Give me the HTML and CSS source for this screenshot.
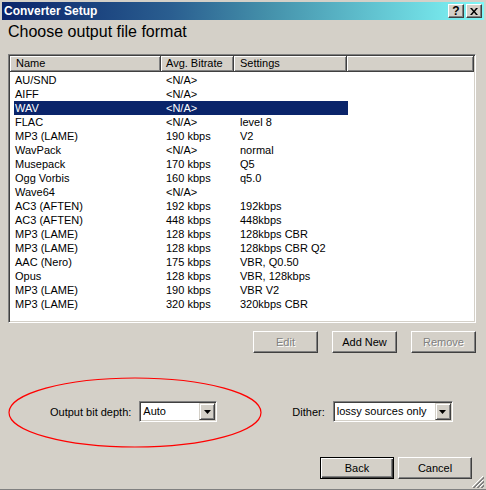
FILE: index.html
```html
<!DOCTYPE html>
<html>
<head>
<meta charset="utf-8">
<link rel="stylesheet" href="styles.css">
</head>
<body>
<div class="window">
  <div class="titlebar">
    <span class="title">Converter Setup</span>
    <div class="tb-buttons">
      <span class="tb-btn">?</span>
      <span class="tb-btn"><svg width="8" height="7" viewBox="0 0 8 7"><path d="M0 0h2l2 2.5L6 0h2L5 3.5 8 7H6L4 4.5 2 7H0l3-3.5z" fill="#000"/></svg></span>
    </div>
  </div>
  <div class="content">
    <div class="heading">Choose output file format</div>
    <div class="listbox">
      <div class="header">
        <div class="hcell h-name">Name</div>
        <div class="hcell h-rate">Avg. Bitrate</div>
        <div class="hcell h-set">Settings</div>
        <div class="hcell h-fill"></div>
      </div>
      <div class="rows">
        <div class="row"><span class="c-name">AU/SND</span><span class="c-rate">&lt;N/A&gt;</span><span class="c-set"></span></div>
        <div class="row"><span class="c-name">AIFF</span><span class="c-rate">&lt;N/A&gt;</span><span class="c-set"></span></div>
        <div class="row selected"><span class="c-name">WAV</span><span class="c-rate">&lt;N/A&gt;</span><span class="c-set"></span></div>
        <div class="row"><span class="c-name">FLAC</span><span class="c-rate">&lt;N/A&gt;</span><span class="c-set">level 8</span></div>
        <div class="row"><span class="c-name">MP3 (LAME)</span><span class="c-rate">190 kbps</span><span class="c-set">V2</span></div>
        <div class="row"><span class="c-name">WavPack</span><span class="c-rate">&lt;N/A&gt;</span><span class="c-set">normal</span></div>
        <div class="row"><span class="c-name">Musepack</span><span class="c-rate">170 kbps</span><span class="c-set">Q5</span></div>
        <div class="row"><span class="c-name">Ogg Vorbis</span><span class="c-rate">160 kbps</span><span class="c-set">q5.0</span></div>
        <div class="row"><span class="c-name">Wave64</span><span class="c-rate">&lt;N/A&gt;</span><span class="c-set"></span></div>
        <div class="row"><span class="c-name">AC3 (AFTEN)</span><span class="c-rate">192 kbps</span><span class="c-set">192kbps</span></div>
        <div class="row"><span class="c-name">AC3 (AFTEN)</span><span class="c-rate">448 kbps</span><span class="c-set">448kbps</span></div>
        <div class="row"><span class="c-name">MP3 (LAME)</span><span class="c-rate">128 kbps</span><span class="c-set">128kbps CBR</span></div>
        <div class="row"><span class="c-name">MP3 (LAME)</span><span class="c-rate">128 kbps</span><span class="c-set">128kbps CBR Q2</span></div>
        <div class="row"><span class="c-name">AAC (Nero)</span><span class="c-rate">175 kbps</span><span class="c-set">VBR, Q0.50</span></div>
        <div class="row"><span class="c-name">Opus</span><span class="c-rate">128 kbps</span><span class="c-set">VBR, 128kbps</span></div>
        <div class="row"><span class="c-name">MP3 (LAME)</span><span class="c-rate">190 kbps</span><span class="c-set">VBR V2</span></div>
        <div class="row"><span class="c-name">MP3 (LAME)</span><span class="c-rate">320 kbps</span><span class="c-set">320kbps CBR</span></div>
      </div>
    </div>
    <div class="list-buttons">
      <div class="btn disabled">Edit</div>
      <div class="btn">Add New</div>
      <div class="btn disabled">Remove</div>
    </div>
    <div class="options">
      <span class="label">Output bit depth:</span>
      <div class="combo combo-depth"><span class="combo-text">Auto</span><span class="combo-btn"><svg width="7" height="4" viewBox="0 0 7 4"><path d="M0 0h7L3.5 4z" fill="#000"/></svg></span></div>
      <span class="label label-dither">Dither:</span>
      <div class="combo combo-dither"><span class="combo-text">lossy sources only</span><span class="combo-btn"><svg width="7" height="4" viewBox="0 0 7 4"><path d="M0 0h7L3.5 4z" fill="#000"/></svg></span></div>
    </div>
    <div class="bottom-buttons">
      <div class="btn default"><span class="btn-inner">Back</span></div>
      <div class="btn wide">Cancel</div>
    </div>
  </div>
  <svg class="grip" width="12" height="12" viewBox="0 0 12 12">
    <path d="M11 0L0 11M11 4L4 11M11 8L8 11" stroke="#fff" stroke-width="1" shape-rendering="crispEdges"/>
    <path d="M12 1L1 12M12 2L2 12M12 5L5 12M12 6L6 12M12 9L9 12M12 10L10 12" stroke="#808080" stroke-width="1" shape-rendering="crispEdges"/>
  </svg>
  <svg class="annotation" width="486" height="490" viewBox="0 0 486 490">
    <ellipse cx="135" cy="412.5" rx="126" ry="34.5" fill="none" stroke="#ff0000" stroke-width="1.2"/>
  </svg>
</div>
</body>
</html>
```
FILE: styles.css
```css
html, body {
  margin: 0;
  padding: 0;
  background: #d4d0c8;
}
.window {
  position: relative;
  width: 486px;
  height: 490px;
  box-sizing: border-box;
  padding: 2px 2px 0 2px;
  border-bottom: 1px solid #808080;
  background: #d4d0c8;
  font-family: "Liberation Sans", Arial, sans-serif;
  font-size: 11px;
  color: #000;
  overflow: hidden;
}
.titlebar {
  height: 18px;
  display: flex;
  align-items: center;
  justify-content: space-between;
  background: linear-gradient(to right, #0a246a 0%, #2a5e90 35%, #4490aa 55%, #80f8f8 100%);
  padding: 0 2px 0 2px;
}
.title {
  color: #fff;
  font-weight: bold;
  font-size: 12px;
  line-height: 18px;
}
.tb-buttons {
  display: flex;
  gap: 2px;
}
.tb-btn {
  width: 16px;
  height: 14px;
  box-sizing: border-box;
  background: #d4d0c8;
  border: 1px solid;
  border-color: #fff #404040 #404040 #fff;
  box-shadow: inset -1px -1px #808080;
  display: flex;
  align-items: center;
  justify-content: center;
  font-weight: bold;
  font-size: 12px;
  line-height: 12px;
}
.content {
  padding: 0 8px 0 6px;
}
.heading {
  margin-top: 3px;
  height: 18px;
  font-size: 16px;
  line-height: 18px;
}
.listbox {
  margin-top: 13px;
  height: 269px;
  box-sizing: border-box;
  background: #fff;
  border: 1px solid;
  border-color: #808080 #fff #fff #808080;
  box-shadow: inset 1px 1px #404040, inset -1px -1px #d4d0c8;
  padding: 1px;
}
.header {
  display: flex;
  height: 16px;
}
.hcell {
  box-sizing: border-box;
  height: 16px;
  background: #d4d0c8;
  border-right: 1px solid #404040;
  border-bottom: 1px solid #404040;
  box-shadow: inset 1px 1px #fff, inset -1px -1px #808080;
  line-height: 15px;
  padding-left: 6px;
  white-space: nowrap;
}
.h-name { width: 151px; }
.h-rate { width: 73px; padding-left: 5px; }
.h-set { width: 113px; }
.h-fill { flex: 1; }
.rows {
  margin-top: 1px;
  margin-left: 4px;
}
.row {
  display: flex;
  width: 334px;
  height: 14px;
  line-height: 14px;
  white-space: nowrap;
}
.row.selected {
  background: #0a246a;
  color: #fff;
}
.c-name { width: 147px; padding-left: 1px; box-sizing: border-box; }
.c-rate { width: 73px; padding-left: 5px; box-sizing: border-box; }
.c-set { width: 114px; padding-left: 6px; box-sizing: border-box; }
.list-buttons {
  margin-top: 8px;
  display: flex;
  justify-content: flex-end;
  gap: 14px;
}
.btn {
  width: 65px;
  height: 22px;
  box-sizing: border-box;
  background: #d4d0c8;
  border: 1px solid;
  border-color: #fff #404040 #404040 #fff;
  box-shadow: inset -1px -1px #808080;
  display: flex;
  align-items: center;
  justify-content: center;
  line-height: 14px;
}
.btn.disabled {
  color: #808080;
  text-shadow: 1px 1px #fff;
}
.btn.wide {
  width: 74px;
}
.btn.default {
  width: 74px;
  border: 1px solid #000;
  box-shadow: inset 1px 1px #fff, inset -1px -1px #404040, inset -2px -2px #808080;
}
.options {
  margin-top: 48px;
  height: 21px;
  display: flex;
  align-items: center;
  padding-left: 42px;
}
.label {
  line-height: 14px;
  white-space: nowrap;
}
.combo {
  margin-left: 8px;
  height: 21px;
  box-sizing: border-box;
  background: #fff;
  border: 1px solid;
  border-color: #808080 #fff #fff #808080;
  box-shadow: inset 1px 1px #404040, inset -1px -1px #d4d0c8;
  padding: 1px;
  display: flex;
  align-items: stretch;
}
.combo-depth { width: 78px; }
.combo-dither { width: 120px; }
.label-dither { margin-left: 75px; }
.combo-text {
  flex: 1;
  padding-left: 2px;
  line-height: 17px;
  white-space: nowrap;
  overflow: hidden;
}
.combo-btn {
  width: 16px;
  box-sizing: border-box;
  background: #d4d0c8;
  border: 1px solid;
  border-color: #d4d0c8 #404040 #404040 #d4d0c8;
  box-shadow: inset 1px 1px #fff, inset -1px -1px #808080;
  display: flex;
  align-items: center;
  justify-content: center;
}
.bottom-buttons {
  margin-top: 35px;
  display: flex;
  justify-content: flex-end;
  gap: 4px;
  padding-right: 4px;
}
.grip {
  position: absolute;
  right: 2px;
  bottom: 1px;
}
.annotation {
  position: absolute;
  left: 0;
  top: 0;
  pointer-events: none;
}
```
